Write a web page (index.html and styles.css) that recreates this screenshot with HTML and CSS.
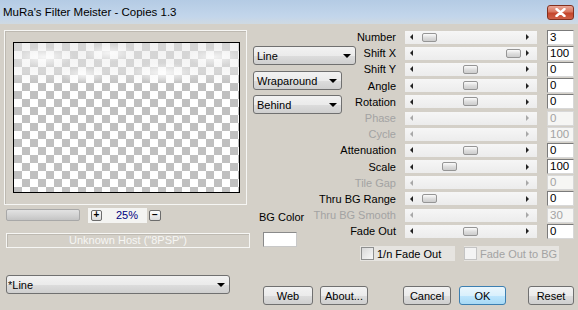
FILE: index.html
```html
<!DOCTYPE html>
<html lang="en">
<head>
    <meta charset="UTF-8">
    <title>MuRa's Filter Meister - Copies 1.3</title>
    <link rel="stylesheet" href="styles.css">
</head>
<body>
<div class="window">
    <div class="titlebar">
        <span class="title">MuRa's Filter Meister - Copies 1.3</span>
        <span class="close">
            <svg width="11" height="9" viewBox="0 0 11 9"><path d="M1.5 1 L9.5 8 M9.5 1 L1.5 8" stroke="#fff" stroke-width="2.4" stroke-linecap="round"/></svg>
        </span>
    </div>
    <div class="body">
        <div class="left">
            <div class="preview-group">
                <div class="preview"></div>
            </div>
            <div class="zoom-row">
                <div class="progress"></div>
                <div class="zoom-ctl">
                    <span class="mini-btn">+</span>
                    <span class="zoom-val">25%</span>
                </div>
                <span class="mini-btn minus">&minus;</span>
            </div>
            <div class="host">Unknown Host ("8PSP")</div>
            <div class="select preset">*Line<i class="arrow"></i></div>
        </div>

        <div class="right">
            <div class="top">
                <div class="mid">
                    <div class="select sel-line">Line<i class="arrow"></i></div>
                    <div class="select sel-small">Wraparound<i class="arrow"></i></div>
                    <div class="select sel-small sel-behind">Behind<i class="arrow"></i></div>
                    <div class="bg-label">BG Color</div>
                    <div class="color-box"></div>
                </div>
                <div class="params">
                    <div class="row">
                        <span class="label">Number</span>
                        <div class="track"><i class="la"></i><span class="thumb" style="left:17px"></span><i class="ra"></i></div>
                        <span class="value">3</span>
                    </div>
                    <div class="row">
                        <span class="label">Shift X</span>
                        <div class="track"><i class="la"></i><span class="thumb" style="left:101px"></span><i class="ra"></i></div>
                        <span class="value">100</span>
                    </div>
                    <div class="row">
                        <span class="label">Shift Y</span>
                        <div class="track"><i class="la"></i><span class="thumb" style="left:58px"></span><i class="ra"></i></div>
                        <span class="value">0</span>
                    </div>
                    <div class="row">
                        <span class="label">Angle</span>
                        <div class="track"><i class="la"></i><span class="thumb" style="left:58px"></span><i class="ra"></i></div>
                        <span class="value">0</span>
                    </div>
                    <div class="row">
                        <span class="label">Rotation</span>
                        <div class="track"><i class="la"></i><span class="thumb" style="left:58px"></span><i class="ra"></i></div>
                        <span class="value">0</span>
                    </div>
                    <div class="row disabled">
                        <span class="label">Phase</span>
                        <div class="track"><i class="la"></i><i class="ra"></i></div>
                        <span class="value">0</span>
                    </div>
                    <div class="row disabled">
                        <span class="label">Cycle</span>
                        <div class="track"><i class="la"></i><i class="ra"></i></div>
                        <span class="value">100</span>
                    </div>
                    <div class="row">
                        <span class="label">Attenuation</span>
                        <div class="track"><i class="la"></i><span class="thumb" style="left:58px"></span><i class="ra"></i></div>
                        <span class="value">0</span>
                    </div>
                    <div class="row">
                        <span class="label">Scale</span>
                        <div class="track"><i class="la"></i><span class="thumb" style="left:37px"></span><i class="ra"></i></div>
                        <span class="value">100</span>
                    </div>
                    <div class="row disabled">
                        <span class="label">Tile Gap</span>
                        <div class="track"><i class="la"></i><i class="ra"></i></div>
                        <span class="value">0</span>
                    </div>
                    <div class="row">
                        <span class="label">Thru BG Range</span>
                        <div class="track"><i class="la"></i><span class="thumb" style="left:17px"></span><i class="ra"></i></div>
                        <span class="value">0</span>
                    </div>
                    <div class="row disabled">
                        <span class="label">Thru BG Smooth</span>
                        <div class="track"><i class="la"></i><i class="ra"></i></div>
                        <span class="value">30</span>
                    </div>
                    <div class="row">
                        <span class="label">Fade Out</span>
                        <div class="track"><i class="la"></i><span class="thumb" style="left:58px"></span><i class="ra"></i></div>
                        <span class="value">0</span>
                    </div>
                    <div class="checks">
                        <label class="check"><span class="box"></span>1/n Fade Out</label>
                        <label class="check check-off"><span class="box"></span>Fade Out to BG</label>
                    </div>
                </div>
            </div>
            <div class="footer">
                <span class="btn btn-web">Web</span>
                <span class="btn btn-about">About...</span>
                <span class="btn btn-cancel">Cancel</span>
                <span class="btn btn-ok">OK</span>
                <span class="btn btn-reset">Reset</span>
            </div>
        </div>
    </div>
</div>
</body>
</html>
```

FILE: styles.css
```css
body{
    margin: 0;
}
.window{
    width: 578px;
    height: 310px;
    background: #d4d0c8;
    font-family: "Liberation Sans", Arial, sans-serif;
    font-size: 11px;
    color: #000;
    overflow: hidden;
}
.titlebar{
    height: 24px;
    display: flex;
    align-items: center;
    justify-content: space-between;
    padding: 0 4px 0 3px;
    background: linear-gradient(to bottom, #b4cbe4, #c3d6eb 70%, #cfd9e2);
}
.title{
    font-size: 11.5px;
    margin-top: -1px;
}
.close{
    width: 27px;
    height: 15px;
    box-sizing: border-box;
    display: flex;
    align-items: center;
    justify-content: center;
    border: 1px solid #83301f;
    border-radius: 3px;
    background: linear-gradient(to bottom, #e9a899, #d8765f 45%, #c4452b 55%, #cf6148);
}
.body{
    display: flex;
    height: 286px;
}

/* left side */
.left{
    width: 253px;
    padding-left: 4px;
    box-sizing: border-box;
}
.preview-group{
    margin-top: 6px;
    width: 243px;
    height: 175px;
    box-sizing: border-box;
    border: 1px solid #f6f6f4;
    box-shadow: inset 1px 1px 0 #bdb9b1;
    padding: 11px 0 0 8px;
}
.preview{
    width: 227px;
    height: 151px;
    box-sizing: border-box;
    border: 1px solid #000;
    background:
        radial-gradient(ellipse 30px 10px at 30px 14px, rgba(255,255,255,.8), transparent),
        radial-gradient(ellipse 26px 9px at 95px 10px, rgba(255,255,255,.75), transparent),
        radial-gradient(ellipse 34px 10px at 150px 30px, rgba(255,255,255,.8), transparent),
        radial-gradient(ellipse 28px 9px at 200px 14px, rgba(255,255,255,.7), transparent),
        radial-gradient(ellipse 22px 8px at 70px 32px, rgba(255,255,255,.7), transparent),
        linear-gradient(to bottom, rgba(230,230,230,.55), rgba(240,240,240,.45) 70%, transparent) 0 0 / 100% 42px no-repeat,
        conic-gradient(#fff 25%, #c0c0c0 0 50%, #fff 0 75%, #c0c0c0 0) 0 0 / 16px 16px;
}
.zoom-row{
    display: flex;
    align-items: center;
    margin: 4px 0 0 2px;
    height: 12px;
}
.progress{
    width: 74px;
    height: 12px;
    box-sizing: border-box;
    border: 1px solid #a8a8a8;
    border-radius: 2px;
    background: linear-gradient(to bottom, #e2e2e2, #d4d4d4 50%, #c4c4c4);
}
.zoom-ctl{
    display: flex;
    align-items: center;
    margin-left: 8px;
    width: 59px;
    height: 15px;
    padding-left: 3px;
    box-sizing: border-box;
    background: #f4f4f2;
}
.zoom-val{
    margin-left: 14px;
    font-size: 11px;
    color: #000080;
}
.mini-btn{
    width: 11px;
    height: 11px;
    box-sizing: border-box;
    border: 1px solid #6c6c6c;
    border-radius: 2px;
    background: linear-gradient(to bottom, #fdfdfd, #dadada);
    display: flex;
    align-items: center;
    justify-content: center;
    font-size: 10px;
    font-weight: bold;
    line-height: 1;
}
.minus{
    margin-left: 2px;
    width: 12px;
}
.host{
    margin: 12px 0 0 2px;
    width: 244px;
    height: 15px;
    box-sizing: border-box;
    border: 1px solid #f6f6f4;
    box-shadow: inset 1px 1px 0 #bdb9b1;
    color: #f6f6f4;
    text-align: center;
    line-height: 13px;
}

/* selects and buttons */
.select{
    display: flex;
    align-items: center;
    justify-content: space-between;
    height: 19px;
    box-sizing: border-box;
    border: 1px solid #707070;
    border-radius: 3px;
    background: linear-gradient(to bottom, #f2f2f2, #ebebeb 50%, #dddddd 51%, #cfcfcf);
    padding: 0 4px 0 3px;
}
.arrow{
    width: 0;
    height: 0;
    border-left: 4px solid transparent;
    border-right: 4px solid transparent;
    border-top: 4px solid #000;
}
.preset{
    margin: 27px 0 0 2px;
    width: 224px;
    padding-left: 1px;
}
.btn{
    height: 19px;
    box-sizing: border-box;
    border: 1px solid #707070;
    border-radius: 3px;
    background: linear-gradient(to bottom, #f2f2f2, #ebebeb 50%, #dddddd 51%, #cfcfcf);
    display: flex;
    align-items: center;
    justify-content: center;
}

/* right side */
.right{
    flex: 1;
    display: flex;
    flex-direction: column;
}
.top{
    display: flex;
    align-items: flex-start;
}
.mid{
    width: 103px;
}
.sel-line{
    margin-top: 22px;
    width: 103px;
}
.sel-small{
    margin-top: 6px;
    width: 89px;
}
.sel-behind{
    margin-top: 5px;
}
.bg-label{
    margin: 97px 0 0 6px;
    line-height: 13px;
}
.color-box{
    margin: 8px 0 0 10px;
    width: 34px;
    height: 15px;
    box-sizing: border-box;
    background: #fff;
    border: 1px solid #c8c8c8;
    border-top-color: #8a8a8a;
    border-left-color: #8a8a8a;
}
.params{
    padding-top: 5px;
}
.row{
    display: grid;
    grid-template-columns: 40px 132px 28px;
    column-gap: 9px;
    align-items: center;
    height: 16.2px;
}
.label{
    display: flex;
    justify-content: flex-end;
    white-space: nowrap;
}
.track{
    position: relative;
    height: 13px;
    display: flex;
    align-items: center;
    justify-content: space-between;
    padding: 0 8px 0 5px;
    background: linear-gradient(to bottom, #f6f6f6, #ececec);
}
.la, .ra{
    width: 0;
    height: 0;
    border-top: 3px solid transparent;
    border-bottom: 3px solid transparent;
}
.la{
    border-right: 3px solid #222;
}
.ra{
    border-left: 3px solid #222;
}
.thumb{
    position: absolute;
    top: 2px;
    width: 15px;
    height: 9px;
    box-sizing: border-box;
    border: 1px solid #959595;
    border-radius: 2px;
    background: linear-gradient(to bottom, #fbfbfb, #dcdcdc 55%, #cdcdcd);
}
.value{
    margin-left: 1px;
    height: 15px;
    box-sizing: border-box;
    border: 1px solid #d8d8d8;
    border-top-color: #7b7b7b;
    border-left-color: #7b7b7b;
    background: #fff;
    padding-left: 2px;
    line-height: 13px;
    font-size: 11.5px;
}
.disabled .label,
.disabled .value{
    color: #a3a3a3;
}
.disabled .value{
    border-color: #d8d8d8;
    background: #f6f6f4;
}
.disabled .la{
    border-right-color: #a8a8a8;
}
.disabled .ra{
    border-left-color: #a8a8a8;
}
.checks{
    display: flex;
    margin: 7px 0 0 4px;
    gap: 9px;
}
.check{
    display: flex;
    align-items: center;
    gap: 3px;
    height: 15px;
    padding-left: 1px;
    background: #e6e4e0;
}
.check:first-child{
    width: 94px;
}
.check-off{
    width: 95px;
    color: #a3a3a3;
    padding-left: 0;
}
.box{
    width: 13px;
    height: 13px;
    box-sizing: border-box;
    border: 1px solid #8e8f8f;
    background: linear-gradient(135deg, #d8d8d8, #f8f8f8);
}
.check-off .box{
    border-color: #c4c4c4;
    background: #f4f4f4;
}
.footer{
    display: flex;
    margin-top: auto;
    margin-bottom: 5px;
}
.btn-web{
    margin-left: 10px;
    width: 50px;
}
.btn-about{
    margin-left: 7px;
    width: 48px;
}
.btn-cancel{
    margin-left: 35px;
    width: 48px;
}
.btn-ok{
    margin-left: 8px;
    width: 47px;
    border-color: #3c7fb1;
    background: linear-gradient(to bottom, #eaf6fd, #d9f0fc 50%, #bee6fd 51%, #a7d9f5);
}
.btn-reset{
    margin-left: 22px;
    width: 46px;
}
```
